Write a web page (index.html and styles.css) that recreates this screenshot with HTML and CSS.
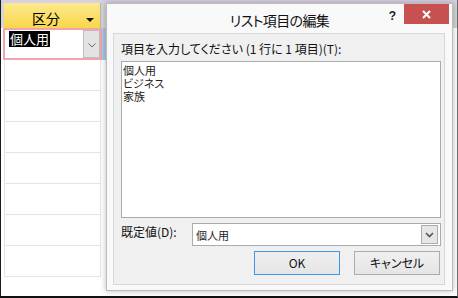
FILE: index.html
```html
<!DOCTYPE html>
<html lang="ja">
<head>
<meta charset="utf-8">
<link rel="stylesheet" href="styles.css">
</head>
<body>
<div class="sheet">
  <div class="topband"></div>
  <div class="hdr-row">
    <div class="rowsel"></div>
    <div class="col-hdr"><span class="hdr-text">区分</span><span class="filter"></span></div>
    <div class="col-next"></div>
  </div>
  <div class="edit-row">
    <div class="cell-edit">
      <span class="sel">個人用</span>
      <div class="cell-drop">
        <svg width="8" height="5" viewBox="0 0 8 5"><path d="M0.5 0.5 L4 4 L7.5 0.5" fill="none" stroke="#6a6a6a" stroke-width="1"/></svg>
      </div>
    </div>
    <div class="cell-blue"></div>
  </div>
  <div class="row"></div>
  <div class="row"></div>
  <div class="row"></div>
  <div class="row"></div>
  <div class="row"></div>
  <div class="row"></div>
  <div class="row"></div>
</div>

<div class="dialog">
  <div class="titlebar">
    <div class="title">リスト項目の編集</div>
    <div class="tb-btns">
      <span class="help">?</span>
      <div class="close">
        <svg width="9" height="9" viewBox="0 0 9 9"><path d="M1 1 L8 8 M8 1 L1 8" stroke="#fff" stroke-width="2" fill="none"/></svg>
      </div>
    </div>
  </div>
  <div class="panel">
    <div class="lbl">項目を入力してください (1 行に 1 項目)(T):</div>
    <div class="textbox">
      <div>個人用</div>
      <div>ビジネス</div>
      <div>家族</div>
    </div>
    <div class="def-row">
      <div class="def-lbl">既定値(D):</div>
      <div class="combo">
        <span class="combo-val">個人用</span>
        <div class="combo-drop">
          <svg width="9" height="6" viewBox="0 0 9 6"><path d="M1 1 L4.5 4.5 L8 1" fill="none" stroke="#555" stroke-width="1.6"/></svg>
        </div>
      </div>
    </div>
    <div class="btn-row">
      <div class="btn btn-default">OK</div>
      <div class="btn">キャンセル</div>
    </div>
  </div>
</div>
</body>
</html>
```

FILE: styles.css
```css
* { box-sizing: border-box; margin: 0; padding: 0; }
html, body { width: 458px; height: 298px; overflow: hidden; }
body {
  position: relative;
  background: #fff;
  font-family: "Noto Sans CJK JP", "Noto Sans", sans-serif;
  font-feature-settings: "palt";
  color: #000;
}

/* background datasheet */
.sheet {
  width: 458px;
  height: 298px;
  border-left: 1px solid #1a1a1a;
  border-bottom: 2px solid #111;
  border-right: 1px solid #6d6d6d;
  display: flex;
  flex-direction: column;
  overflow: hidden;
}
.topband { height: 3px; background: #d9cfe3; flex: none; }
.hdr-row { display: flex; height: 25px; flex: none; }
.rowsel { width: 3px; background: #d6d6d6; }
.col-hdr {
  width: 97px;
  background: linear-gradient(#fde98e, #f9d64a);
  border-right: 1px solid #b5b5b5;
  display: flex;
  align-items: center;
  padding-top: 5px;
}
.hdr-text { font-size: 14px; line-height: 16px; margin-left: 28px; }
.filter {
  margin-left: auto;
  margin-right: 6px;
  margin-top: 3px;
  width: 0; height: 0;
  border-left: 4px solid transparent;
  border-right: 4px solid transparent;
  border-top: 4px solid #111;
}
.col-next { flex: 1; background: #d4d4d4; }

.edit-row { display: flex; height: 32px; flex: none; padding-left: 2px; }
.cell-edit {
  width: 99px;
  height: 32px;
  border: 2px solid #f2a3ab;
  background: #fff;
  display: flex;
  justify-content: space-between;
  align-items: flex-start;
}
.sel {
  margin: 1px 0 0 4px;
  background: #000;
  color: #fff;
  font-size: 13px;
  line-height: 16px;
  padding: 0 1px;
}
.cell-drop {
  width: 17px;
  height: 28px;
  background: #e3e3e3;
  border: 1px solid #bdbdbd;
  display: flex;
  align-items: center;
  justify-content: center;
  padding-top: 3px;
}
.cell-blue { width: 5px; background: #a9c6e4; }

.row {
  flex: none;
  height: 31px;
  width: 97px;
  margin-left: 3px;
  border-left: 1px solid #e4e4e4;
  border-right: 1px solid #e4e4e4;
  border-bottom: 1px solid #e4e4e4;
}

/* dialog */
.dialog {
  position: absolute;
  left: 106px;
  top: 3px;
  width: 347px;
  height: 288px;
  background: #f9f9f9;
  border: 1px solid #bcbcbc;
  box-shadow: 0 0 6px rgba(0, 0, 0, 0.28);
  display: flex;
  flex-direction: column;
}
.titlebar {
  height: 29px;
  flex: none;
  display: grid;
  grid-template-columns: 1fr auto 1fr;
}
.title {
  grid-column: 2;
  font-size: 14px;
  line-height: 18px;
  letter-spacing: -0.6px;
  padding-top: 7px;
  color: #111;
}
.tb-btns {
  grid-column: 3;
  justify-self: end;
  display: flex;
  align-items: flex-start;
  margin-right: 3px;
}
.help {
  font-family: "Liberation Sans", Arial, sans-serif;
  font-weight: bold;
  font-size: 12px;
  line-height: 14px;
  margin-top: 5px;
  margin-right: 8px;
  color: #222;
}
.close {
  width: 45px;
  height: 20px;
  background: #c75050;
  display: flex;
  align-items: center;
  justify-content: center;
}

.panel {
  flex: 1;
  margin: 0 7px 5px 6px;
  background: #f0f0f0;
  border: 1px solid #d7d7d7;
  padding: 7px 3px 0 7px;
  display: flex;
  flex-direction: column;
}
.lbl { font-size: 12px; line-height: 16px; color: #111; }
.textbox {
  margin-top: 4px;
  width: 320px;
  height: 157px;
  background: #fff;
  border: 1px solid #ababab;
  padding: 2px 0 0 1px;
  font-size: 11px;
  line-height: 13px;
  color: #222;
}
.def-row { display: flex; margin-top: 5px; height: 23px; }
.def-lbl { width: 71px; font-size: 12px; line-height: 16px; padding-top: 1px; color: #111; }
.combo {
  width: 249px;
  height: 23px;
  background: #fff;
  border: 1px solid #acacac;
  display: flex;
  align-items: center;
}
.combo-val { font-size: 11px; line-height: 14px; padding-left: 3px; color: #222; }
.combo-drop {
  margin-left: auto;
  margin-right: 2px;
  width: 17px;
  height: 19px;
  background: #e6e6e6;
  border: 1px solid #acacac;
  display: flex;
  align-items: center;
  justify-content: center;
}
.btn-row {
  display: flex;
  justify-content: flex-end;
  gap: 14px;
  margin-top: 5px;
  width: 320px;
  padding-right: 1px;
}
.btn {
  width: 86px;
  height: 24px;
  border: 1px solid #acacac;
  background: linear-gradient(#f0f0f0, #e5e5e5);
  font-size: 12px;
  line-height: 22px;
  text-align: center;
  color: #111;
}
.btn-default { border-color: #3c96ee; }
```
